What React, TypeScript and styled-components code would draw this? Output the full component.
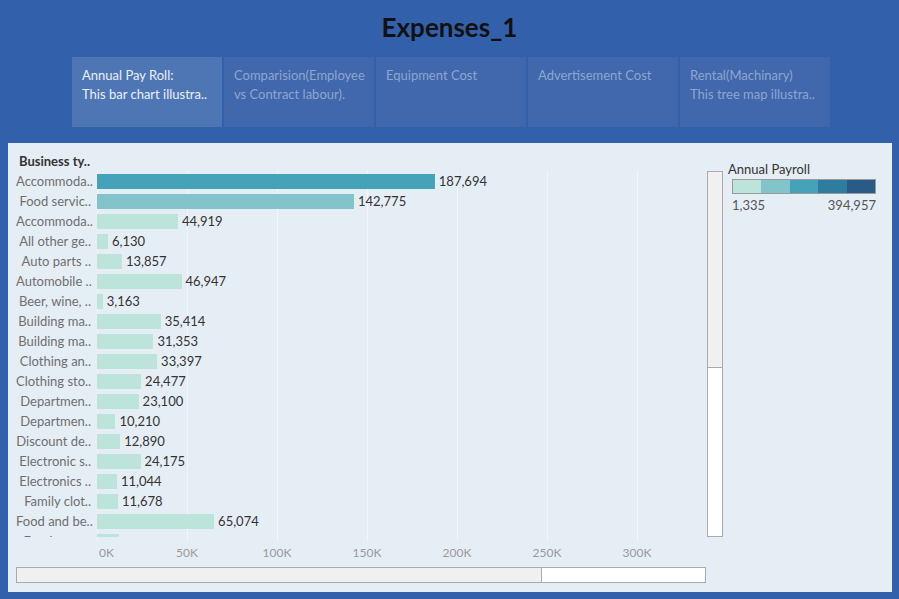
import React from "react";
import styled, { createGlobalStyle } from "styled-components";

const Global = createGlobalStyle`
  html, body { margin: 0; padding: 0; }
  body { background: #3360aa; font-family: Lato, "Noto Sans", sans-serif; }
`;

const Page = styled.div`
  width: 899px;
  height: 599px;
  background: #3360aa;
  overflow: hidden;
  display: flex;
  flex-direction: column;
`;

const Title = styled.h1`
  margin: 0;
  height: 57px;
  display: flex;
  align-items: center;
  justify-content: center;
  font-family: Lato, sans-serif;
  font-weight: 700;
  font-size: 26px;
  color: #111;
  padding-bottom: 3px;
  box-sizing: border-box;
`;

const Tabs = styled.div`
  display: flex;
  gap: 2px;
  margin-left: 72px;
  height: 70px;
`;

const Tab = styled.div<{ $active?: boolean }>`
  width: 150px;
  box-sizing: border-box;
  padding: 9px 10px;
  background: ${(p) => (p.$active ? "#4f76b4" : "#4167ac")};
  color: ${(p) => (p.$active ? "#eaf0f8" : "#8da6d0")};
  font-size: 13px;
  line-height: 19px;
  white-space: nowrap;
  overflow: hidden;
`;

const Panel = styled.div`
  margin: 16px 7px 0 8px;
  height: 449px;
  background: #e6eef5;
  box-sizing: border-box;
  padding: 9px 16px 0 8px;
  display: grid;
  grid-template-columns: 691px 16px 1fr;
  column-gap: 0;
`;

const ChartCol = styled.div`
  display: flex;
  flex-direction: column;
`;

const Header = styled.div`
  height: 19px;
  line-height: 19px;
  padding-left: 3px;
  font-size: 13px;
  font-weight: 700;
  color: #333;
`;

const ChartBody = styled.div`
  display: flex;
  height: 370px;
`;

const LabelCol = styled.div`
  width: 81px;
  height: 366px;
  overflow: hidden;
`;

const RowLabel = styled.div`
  height: 20px;
  line-height: 20px;
  text-align: right;
  padding-right: 6px;
  font-size: 13px;
  color: #6f6f6f;
  white-space: nowrap;
  overflow: hidden;
`;

const PlotCol = styled.div`
  flex: 1;
  height: 370px;
  background-image: linear-gradient(to right, #f3f6f9 1px, transparent 1px);
  background-size: 90px 100%;
`;

const Bars = styled.div`
  height: 366px;
  overflow: hidden;
`;

const BarRow = styled.div`
  height: 20px;
  display: flex;
  align-items: flex-start;
`;

const Bar = styled.div<{ $tone: number }>`
  margin-top: 3px;
  height: 15px;
  background: ${(p) => ["#bce4da", "#82c4ca", "#45a3b9"][p.$tone]};
`;

const Value = styled.span`
  margin-left: 4px;
  font-size: 13px;
  line-height: 20px;
  color: #333;
`;

const Axis = styled.div`
  display: flex;
  height: 23px;
  padding-left: 81px;
  font-size: 12px;
  line-height: 23px;
  color: #9a9a9a;
`;

const Tick = styled.div<{ $first?: boolean }>`
  width: ${(p) => (p.$first ? "45px" : "90px")};
  text-align: ${(p) => (p.$first ? "left" : "center")};
  padding-left: ${(p) => (p.$first ? "2px" : "0")};
  box-sizing: border-box;
`;

const HScroll = styled.div`
  margin-top: 3px;
  width: 690px;
  height: 16px;
  box-sizing: border-box;
  border: 1px solid #aaa;
  background: #fff;
  display: flex;
`;

const HThumb = styled.div`
  width: 524px;
  background: #f0f0f0;
  border-right: 1px solid #aaa;
`;

const VScroll = styled.div`
  margin-top: 19px;
  width: 16px;
  height: 366px;
  box-sizing: border-box;
  border: 1px solid #aaa;
  background: #fff;
  display: flex;
  flex-direction: column;
`;

const VThumb = styled.div`
  height: 195px;
  background: #f0f0f0;
  border-bottom: 1px solid #aaa;
`;

const Legend = styled.div`
  padding-left: 5px;
  padding-top: 8px;
`;

const LegendTitle = styled.div`
  font-size: 13px;
  line-height: 18px;
  color: #333;
  white-space: nowrap;
`;

const Ramp = styled.div`
  margin-left: 4px;
  margin-top: 1px;
  height: 15px;
  width: 144px;
  box-sizing: border-box;
  border: 1px solid #9a9a9a;
  display: flex;
`;

const Swatch = styled.div<{ $c: string }>`
  flex: 1;
  background: ${(p) => p.$c};
`;

const RampLabels = styled.div`
  margin-left: 4px;
  width: 144px;
  display: flex;
  justify-content: space-between;
  font-size: 13px;
  line-height: 22px;
  color: #555;
`;

const rows: [string, number][] = [
  ["Accommoda..", 187694],
  ["Food servic..", 142775],
  ["Accommoda..", 44919],
  ["All other ge..", 6130],
  ["Auto parts ..", 13857],
  ["Automobile ..", 46947],
  ["Beer, wine, ..", 3163],
  ["Building ma..", 35414],
  ["Building ma..", 31353],
  ["Clothing an..", 33397],
  ["Clothing sto..", 24477],
  ["Departmen..", 23100],
  ["Departmen..", 10210],
  ["Discount de..", 12890],
  ["Electronic s..", 24175],
  ["Electronics ..", 11044],
  ["Family clot..", 11678],
  ["Food and be..", 65074],
  ["Furniture s..", 12100],
];

const fmt = (n: number) => n.toLocaleString("en-US");

export default function App() {
  return (
    <Page>
      <Global />
      <Title>Expenses_1</Title>
      <Tabs>
        <Tab $active>
          Annual Pay Roll:
          <br />
          This bar chart illustra..
        </Tab>
        <Tab>
          Comparision(Employee
          <br />
          vs Contract labour).
        </Tab>
        <Tab>Equipment Cost</Tab>
        <Tab>Advertisement Cost</Tab>
        <Tab>
          Rental(Machinary)
          <br />
          This tree map illustra..
        </Tab>
      </Tabs>
      <Panel>
        <ChartCol>
          <Header>Business ty..</Header>
          <ChartBody>
            <LabelCol>
              {rows.map(([l], i) => (
                <RowLabel key={i}>{l}</RowLabel>
              ))}
            </LabelCol>
            <PlotCol>
              <Bars>
                {rows.map(([, v], i) => (
                  <BarRow key={i}>
                    <Bar $tone={i === 0 ? 2 : i === 1 ? 1 : 0} style={{ width: `${(v * 0.0018).toFixed(1)}px` }} />
                    {i < rows.length - 1 && <Value>{fmt(v)}</Value>}
                  </BarRow>
                ))}
              </Bars>
            </PlotCol>
          </ChartBody>
          <Axis>
            <Tick $first>0K</Tick>
            <Tick>50K</Tick>
            <Tick>100K</Tick>
            <Tick>150K</Tick>
            <Tick>200K</Tick>
            <Tick>250K</Tick>
            <Tick>300K</Tick>
          </Axis>
          <HScroll>
            <HThumb />
          </HScroll>
        </ChartCol>
        <VScroll>
          <VThumb />
        </VScroll>
        <Legend>
          <LegendTitle>Annual Payroll</LegendTitle>
          <Ramp>
            {["#bce4da", "#82c4ca", "#45a3b9", "#2e7d9e", "#2a5a86"].map((c) => (
              <Swatch key={c} $c={c} />
            ))}
          </Ramp>
          <RampLabels>
            <span>1,335</span>
            <span>394,957</span>
          </RampLabels>
        </Legend>
      </Panel>
    </Page>
  );
}
